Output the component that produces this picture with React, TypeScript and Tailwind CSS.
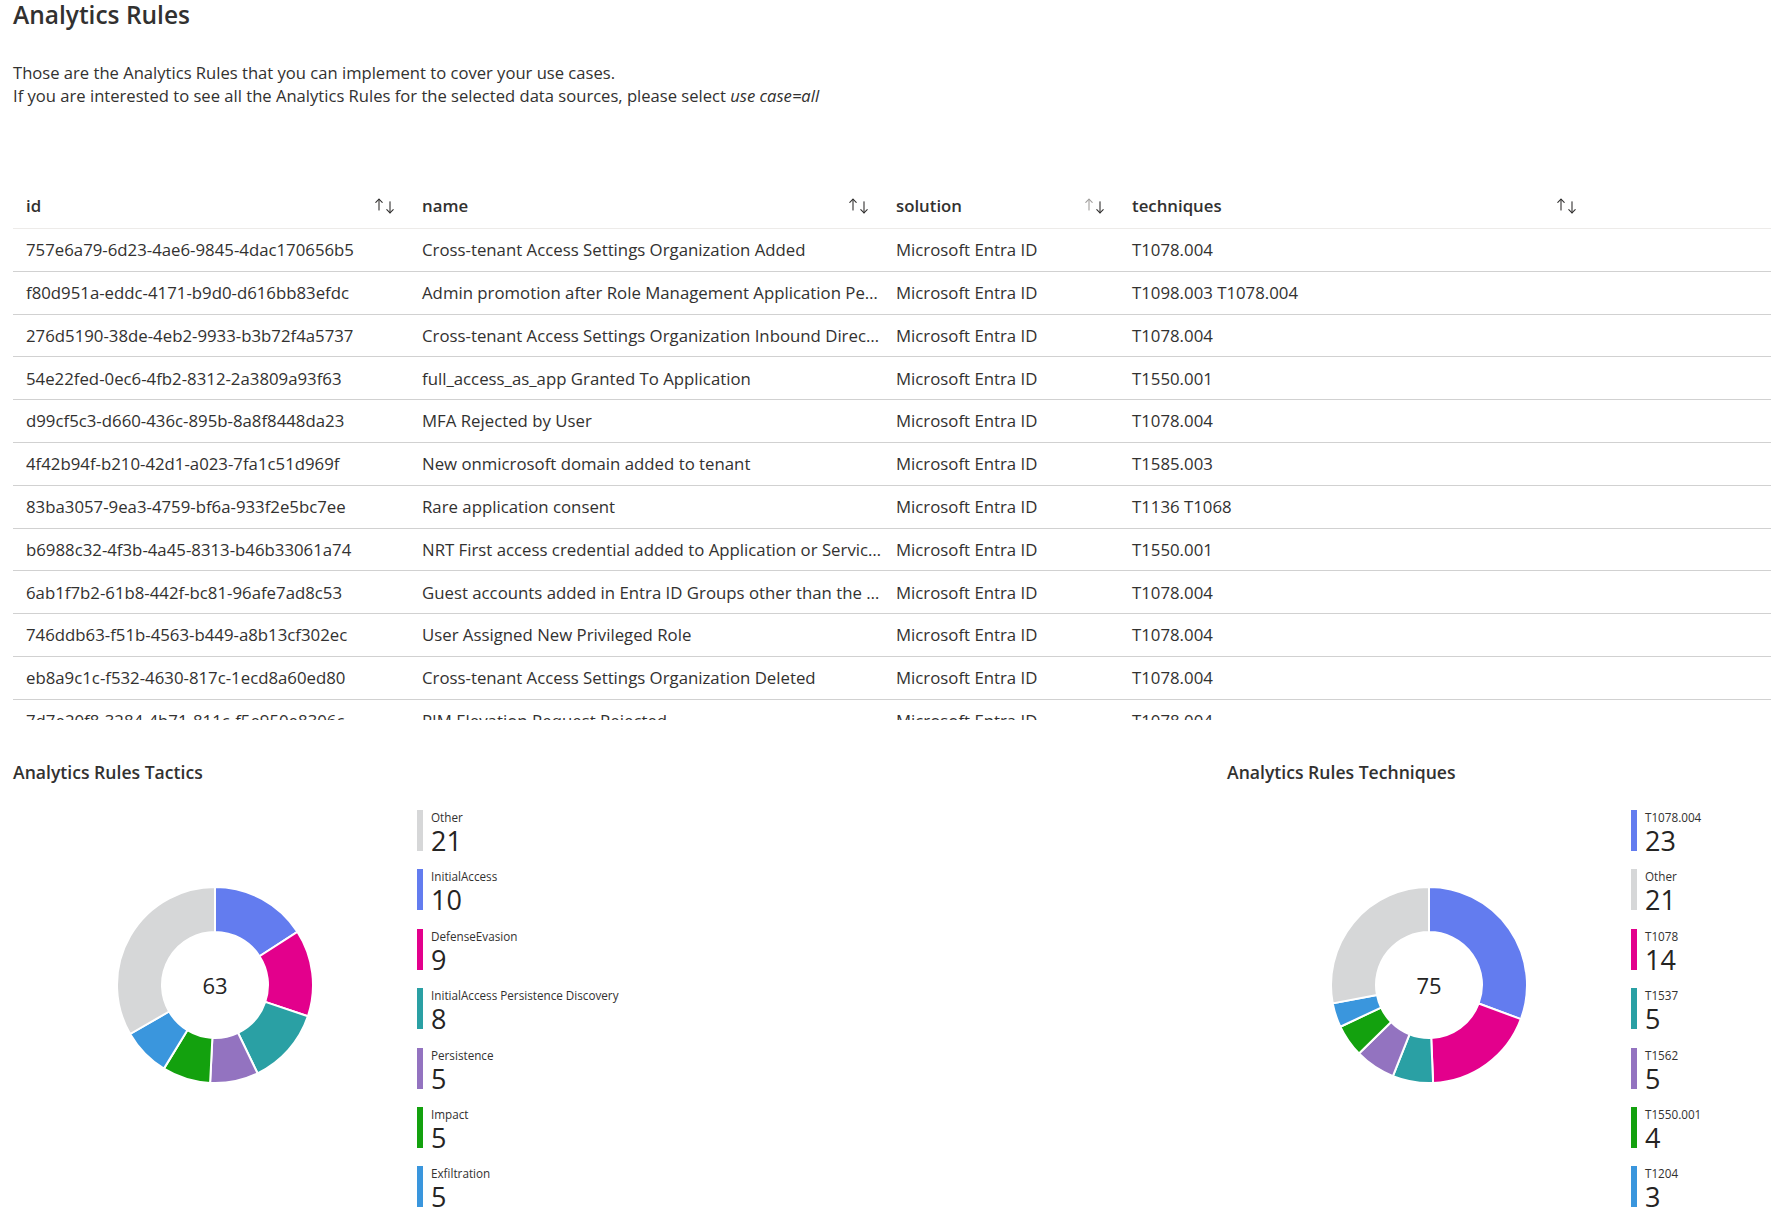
import React from 'react';

const rows = [
  ['757e6a79-6d23-4ae6-9845-4dac170656b5', 'Cross-tenant Access Settings Organization Added', 'T1078.004'],
  ['f80d951a-eddc-4171-b9d0-d616bb83efdc', 'Admin promotion after Role Management Application Pe…', 'T1098.003 T1078.004'],
  ['276d5190-38de-4eb2-9933-b3b72f4a5737', 'Cross-tenant Access Settings Organization Inbound Direc…', 'T1078.004'],
  ['54e22fed-0ec6-4fb2-8312-2a3809a93f63', 'full_access_as_app Granted To Application', 'T1550.001'],
  ['d99cf5c3-d660-436c-895b-8a8f8448da23', 'MFA Rejected by User', 'T1078.004'],
  ['4f42b94f-b210-42d1-a023-7fa1c51d969f', 'New onmicrosoft domain added to tenant', 'T1585.003'],
  ['83ba3057-9ea3-4759-bf6a-933f2e5bc7ee', 'Rare application consent', 'T1136 T1068'],
  ['b6988c32-4f3b-4a45-8313-b46b33061a74', 'NRT First access credential added to Application or Servic…', 'T1550.001'],
  ['6ab1f7b2-61b8-442f-bc81-96afe7ad8c53', 'Guest accounts added in Entra ID Groups other than the …', 'T1078.004'],
  ['746ddb63-f51b-4563-b449-a8b13cf302ec', 'User Assigned New Privileged Role', 'T1078.004'],
  ['eb8a9c1c-f532-4630-817c-1ecd8a60ed80', 'Cross-tenant Access Settings Organization Deleted', 'T1078.004'],
  ['7d7e20f8-3284-4b71-811c-f5e950e8306c', 'PIM Elevation Request Rejected', 'T1078.004'],
];

const C = {
  blue: '#637cef',
  magenta: '#e3008c',
  teal: '#2aa0a4',
  purple: '#9373c0',
  green: '#13a10e',
  sky: '#3a96dd',
  gray: '#d6d7d8',
};

type Slice = { label: string; value: number; color: string };

const tactics: Slice[] = [
  { label: 'InitialAccess', value: 10, color: C.blue },
  { label: 'DefenseEvasion', value: 9, color: C.magenta },
  { label: 'InitialAccess Persistence Discovery', value: 8, color: C.teal },
  { label: 'Persistence', value: 5, color: C.purple },
  { label: 'Impact', value: 5, color: C.green },
  { label: 'Exfiltration', value: 5, color: C.sky },
  { label: 'Other', value: 21, color: C.gray },
];

const techniques: Slice[] = [
  { label: 'T1078.004', value: 23, color: C.blue },
  { label: 'T1078', value: 14, color: C.magenta },
  { label: 'T1537', value: 5, color: C.teal },
  { label: 'T1562', value: 5, color: C.purple },
  { label: 'T1550.001', value: 4, color: C.green },
  { label: 'T1204', value: 3, color: C.sky },
  { label: 'Other', value: 21, color: C.gray },
];

const SortIcon = ({ faded }: { faded?: boolean }) => (
  <svg width="20" height="16" viewBox="0 0 20 16" fill="none" strokeWidth="1.1" strokeLinecap="round" strokeLinejoin="round" className="shrink-0">
    <g stroke={faded ? '#a19f9d' : '#323130'}>
      <path d="M4 1.2V12" />
      <path d="M0.8 4.4L4 1.2L7.2 4.4" />
    </g>
    <g stroke="#323130">
      <path d="M15 3.8V14.8" />
      <path d="M11.8 11.6L15 14.8L18.2 11.6" />
    </g>
  </svg>
);

const cols = [
  { key: 'id', w: 'w-[396px]' },
  { key: 'name', w: 'w-[474px]' },
  { key: 'solution', w: 'w-[236px]' },
  { key: 'techniques', w: 'w-[472px]' },
];

function pt(cx: number, cy: number, r: number, a: number) {
  return [cx + r * Math.sin(a), cy - r * Math.cos(a)];
}

function arcPath(r0: number, r1: number, a0: number, a1: number) {
  const cx = 100, cy = 100;
  const large = a1 - a0 > Math.PI ? 1 : 0;
  const [x0, y0] = pt(cx, cy, r1, a0);
  const [x1, y1] = pt(cx, cy, r1, a1);
  const [x2, y2] = pt(cx, cy, r0, a1);
  const [x3, y3] = pt(cx, cy, r0, a0);
  return `M${x0} ${y0}A${r1} ${r1} 0 ${large} 1 ${x1} ${y1}L${x2} ${y2}A${r0} ${r0} 0 ${large} 0 ${x3} ${y3}Z`;
}

const Donut = ({ data }: { data: Slice[] }) => {
  const total = data.reduce((s, d) => s + d.value, 0);
  let acc = 0;
  return (
    <div className="relative w-[200px] h-[200px]">
      <svg width="200" height="200" viewBox="0 0 200 200">
        {data.map((d) => {
          const a0 = (acc / total) * Math.PI * 2;
          acc += d.value;
          const a1 = (acc / total) * Math.PI * 2;
          return <path key={d.label} d={arcPath(53, 98, a0, a1)} fill={d.color} stroke="#fff" strokeWidth="2" strokeLinejoin="round" />;
        })}
      </svg>
      <div className="absolute inset-0 flex items-center justify-center text-[22px] text-[#252423]">{total}</div>
    </div>
  );
};

const Legend = ({ data }: { data: Slice[] }) => {
  const sorted = [...data].sort((a, b) => b.value - a.value);
  return (
    <div className="flex flex-col gap-[18.4px]">
      {sorted.map((d) => (
        <div key={d.label} className="flex h-[41px] items-start">
          <div className="w-[6px] h-[41px] shrink-0" style={{ backgroundColor: d.color }} />
          <div className="ml-[8px] flex flex-col">
            <span className="text-[11.7px] leading-[16px] -mt-[1px] whitespace-nowrap">{d.label}</span>
            <span className="text-[27px] leading-[28px] mt-[2px] text-[#252423]">{d.value}</span>
          </div>
        </div>
      ))}
    </div>
  );
};

const ChartCard = ({ title, data }: { title: string; data: Slice[] }) => (
  <div className="w-[544px] shrink-0">
    <h3 className="text-[17.6px] leading-[24px] font-semibold">{title}</h3>
    <div className="mt-[26.5px] flex">
      <div className="w-[404px] h-[350px] shrink-0 flex items-center justify-center">
        <Donut data={data} />
      </div>
      <Legend data={data} />
    </div>
  </div>
);

export default function App() {
  return (
    <div className="w-full h-[1219px] overflow-hidden bg-white text-[#323130] font-['Open_Sans',sans-serif]">
      <div className="pl-[13px]">
        <h1 className="text-[24.5px] leading-[30px] font-semibold">Analytics Rules</h1>
        <p className="mt-[31px] text-[16.6px] leading-[23px]">
          Those are the Analytics Rules that you can implement to cover your use cases.
          <br />
          If you are interested to see all the Analytics Rules for the selected data sources, please select <i>use case=all</i>
        </p>
      </div>

      <div className="ml-[13px] mt-[79px] h-[534px] overflow-hidden text-[16.8px]">
        <div className="flex h-[43px] pb-[2px] border-b border-[#edebe9]">
          {cols.map((c, i) => (
            <div key={c.key} className={`${c.w} flex items-center justify-between pl-[13px] pr-[14px]`}>
              <span className="font-semibold">{c.key}</span>
              <SortIcon faded={i === 2} />
            </div>
          ))}
          <div className="flex-1" />
        </div>
        {rows.map((r) => (
          <div key={r[0]} className="flex h-[42.8px] items-center border-b border-[#d1d1d1]">
            <div className="w-[396px] shrink-0 pl-[13px] pr-[8px] whitespace-nowrap overflow-hidden">{r[0]}</div>
            <div className="w-[474px] shrink-0 pl-[13px] pr-[2px] whitespace-nowrap overflow-hidden">{r[1]}</div>
            <div className="w-[236px] shrink-0 pl-[13px] pr-[8px] whitespace-nowrap overflow-hidden">Microsoft Entra ID</div>
            <div className="w-[472px] shrink-0 pl-[13px] pr-[8px] whitespace-nowrap overflow-hidden">{r[2]}</div>
            <div className="flex-1" />
          </div>
        ))}
      </div>

      <div className="mt-[39.5px] pl-[13px] flex justify-between">
        <ChartCard title="Analytics Rules Tactics" data={tactics} />
        <ChartCard title="Analytics Rules Techniques" data={techniques} />
      </div>
    </div>
  );
}
